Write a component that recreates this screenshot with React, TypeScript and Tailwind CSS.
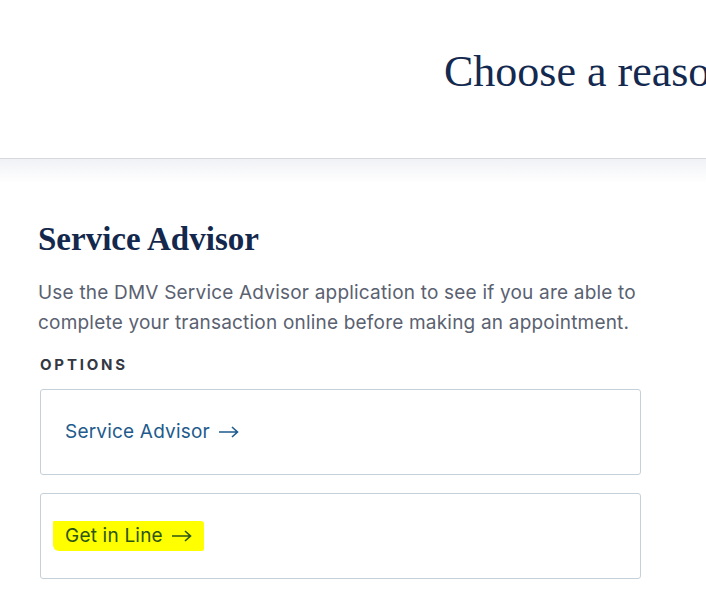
const serif = "font-['Liberation_Serif','DejaVu_Serif',serif]";

const Arrow = () => (
  <svg width="20" height="12" viewBox="0 0 20 12" fill="none" stroke="currentColor" strokeWidth="1.6" className="ml-[9px] inline-block">
    <path d="M0 6h18.5M13 1l5.5 5-5.5 5" />
  </svg>
);

const OptionCard = ({ label, marked }: { label: string; marked?: boolean }) => {
  return (
    <div className="flex h-[86px] w-[601px] items-center rounded-[3px] border border-[#c5d0d9] bg-white pl-[24px]">
      {marked ? (
        <span className="-ml-[12px] flex h-[30px] items-center bg-[#ffff00] pl-[12px] pr-[12px] text-[19px] tracking-[0.2px] text-[#2b5514] [border-radius:1px_3px_2px_6px]">
          {label}
          <Arrow />
        </span>
      ) : (
        <span className="flex items-center text-[19px] tracking-[0.2px] text-[#1e5b8c]">
          {label}
          <Arrow />
        </span>
      )}
    </div>
  );
};

export default function App() {
  return (
    <div className="min-h-[605px] w-[706px] overflow-hidden bg-white font-['Inter','Open_Sans',sans-serif]">
      <header className="h-[159px] overflow-hidden border-b border-[#d6d8dc] bg-white pl-[444px] pt-[46px]">
        <h1 className={`${serif} whitespace-nowrap text-[44px] leading-[52px] text-[#14294f]`}>
          Choose a reason for your visit
        </h1>
      </header>
      <div className="bg-gradient-to-b from-[#f1f2f6] to-white to-[24px] px-[38px] pt-[60px]">
        <h2 className={`${serif} text-[33px] font-bold leading-[40px] text-[#13284c]`}>
          Service Advisor
        </h2>
        <p className="mt-[19px] w-[630px] text-[19px] leading-[30px] tracking-[0.2px] text-[#5a6171]">
          Use the DMV Service Advisor application to see if you are able to complete your transaction online before making an appointment.
        </p>
        <div className="mt-[18px] pl-[2px] text-[15px] font-bold leading-[18px] tracking-[2.8px] text-[#333842]">OPTIONS</div>
        <div className="mt-[15px] flex flex-col gap-[18px] pl-[2px]">
          <OptionCard label="Service Advisor" />
          <OptionCard label="Get in Line" marked />
        </div>
      </div>
    </div>
  );
}
